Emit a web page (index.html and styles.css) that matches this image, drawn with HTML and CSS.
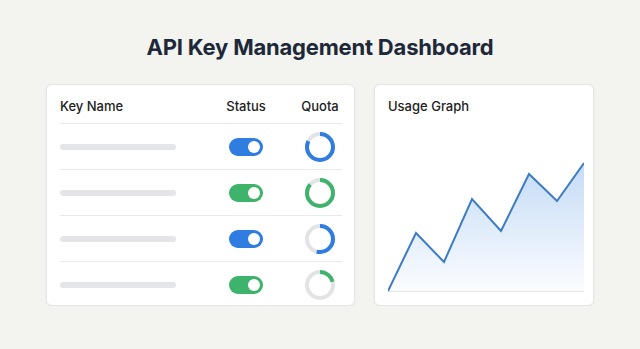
FILE: index.html
```html
<!DOCTYPE html>
<html lang="en">
<head>
  <meta charset="UTF-8">
  <meta name="viewport" content="width=device-width, initial-scale=1.0">
  <title>API Key Management Dashboard</title>
  <link rel="stylesheet" href="styles.css">
</head>
<body>
  <h1 class="page-title">API Key Management Dashboard</h1>

  <div class="dashboard">
    <!-- Keys table -->
    <div class="card keys-card">
      <div class="keys-row keys-head">
        <span>Key Name</span>
        <span class="center">Status</span>
        <span class="center">Quota</span>
      </div>

      <div class="keys-row">
        <div class="key-bar"></div>
        <div class="center"><span class="toggle toggle-blue"></span></div>
        <div class="center">
          <svg class="ring" width="30" height="30" viewBox="0 0 30 30">
            <circle class="ring-track" cx="15" cy="15" r="13"/>
            <circle class="ring-value blue" cx="15" cy="15" r="13" stroke-dasharray="67 82"/>
          </svg>
        </div>
      </div>

      <div class="keys-row">
        <div class="key-bar"></div>
        <div class="center"><span class="toggle toggle-green"></span></div>
        <div class="center">
          <svg class="ring" width="30" height="30" viewBox="0 0 30 30">
            <circle class="ring-track" cx="15" cy="15" r="13"/>
            <circle class="ring-value green" cx="15" cy="15" r="13" stroke-dasharray="70 82"/>
          </svg>
        </div>
      </div>

      <div class="keys-row">
        <div class="key-bar"></div>
        <div class="center"><span class="toggle toggle-blue"></span></div>
        <div class="center">
          <svg class="ring" width="30" height="30" viewBox="0 0 30 30">
            <circle class="ring-track" cx="15" cy="15" r="13"/>
            <circle class="ring-value blue" cx="15" cy="15" r="13" stroke-dasharray="44 82"/>
          </svg>
        </div>
      </div>

      <div class="keys-row">
        <div class="key-bar"></div>
        <div class="center"><span class="toggle toggle-green"></span></div>
        <div class="center">
          <svg class="ring" width="30" height="30" viewBox="0 0 30 30">
            <circle class="ring-track" cx="15" cy="15" r="13"/>
            <circle class="ring-value green" cx="15" cy="15" r="13" stroke-dasharray="17 82"/>
          </svg>
        </div>
      </div>
    </div>

    <!-- Usage graph -->
    <div class="card graph-card">
      <h2 class="card-title">Usage Graph</h2>
      <svg class="graph" width="196" height="172" viewBox="0 0 196 172">
        <defs>
          <linearGradient id="area-fill" x1="0" y1="0" x2="0" y2="1">
            <stop offset="0" stop-color="#2f7fe0" stop-opacity="0.28"/>
            <stop offset="1" stop-color="#2f7fe0" stop-opacity="0.02"/>
          </linearGradient>
        </defs>
        <line x1="0" y1="170.5" x2="196" y2="170.5" stroke="#e6e7e9" stroke-width="1"/>
        <polygon fill="url(#area-fill)" points="0,170 28,112 56,141 84,78 113,110 141,53 169,80 196,42 196,170"/>
        <polyline fill="none" stroke="#3b7cc4" stroke-width="2" stroke-linejoin="miter" points="0,170 28,112 56,141 84,78 113,110 141,53 169,80 196,42"/>
      </svg>
    </div>
  </div>
</body>
</html>
```

FILE: styles.css
```css
:root {
  --page-bg: #f3f3f0;
  --card-bg: #fff;
  --border-color: #e5e5e3;
  --text-color: #1f2733;
  --blue: #2f7de0;
  --green: #3eb36b;
  --track: #e2e3e5;
}

body {
  font-family: Inter, 'Noto Sans', sans-serif;
  margin: 0;
  padding: 0;
  background-color: var(--page-bg);
  color: var(--text-color);
}

.page-title {
  margin: 0;
  padding-top: 33px;
  font-size: 22px;
  line-height: 28px;
  font-weight: 700;
  text-align: center;
  color: #1d2838;
  letter-spacing: -0.2px;
}

.dashboard {
  display: flex;
  gap: 19px;
  width: 548px;
  margin: 23px auto 0;
}

.card {
  background-color: var(--card-bg);
  border: 1px solid var(--border-color);
  border-radius: 6px;
  box-shadow: 0 1px 3px rgba(0, 0, 0, 0.04);
  box-sizing: border-box;
  height: 222px;
}

/* Keys table */
.keys-card {
  width: 309px;
  padding: 0 12px 0 13px;
}

.keys-row {
  display: grid;
  grid-template-columns: 1fr 56px 44px;
  column-gap: 24px;
  align-items: center;
  height: 46px;
  box-sizing: border-box;
  border-top: 1px solid #e9e9ea;
}

.keys-head {
  height: auto;
  border-top: none;
  padding: 13px 0 9px;
  font-size: 13px;
  line-height: 16px;
  font-weight: 500;
  color: #222;
}

.center {
  display: flex;
  justify-content: center;
}

.key-bar {
  width: 116px;
  height: 6px;
  border-radius: 3px;
  background-color: #e3e5e8;
}

.toggle {
  position: relative;
  display: block;
  width: 34px;
  height: 18px;
  border-radius: 9px;
}
.toggle::after {
  content: '';
  position: absolute;
  top: 3px;
  right: 3px;
  width: 12px;
  height: 12px;
  border-radius: 50%;
  background-color: #fff;
}
.toggle-blue {
  background-color: var(--blue);
}
.toggle-green {
  background-color: var(--green);
}

.ring {
  display: block;
  transform: rotate(-90deg);
}
.ring-track,
.ring-value {
  fill: none;
  stroke-width: 4;
}
.ring-track {
  stroke: var(--track);
}
.ring-value.blue {
  stroke: var(--blue);
}
.ring-value.green {
  stroke: var(--green);
}

/* Usage graph */
.graph-card {
  width: 220px;
  padding: 13px 10px 12px 13px;
  display: flex;
  flex-direction: column;
}

.card-title {
  margin: 0;
  font-size: 13px;
  line-height: 16px;
  font-weight: 500;
  color: #222;
}

.graph {
  display: block;
  margin-top: auto;
}
```
